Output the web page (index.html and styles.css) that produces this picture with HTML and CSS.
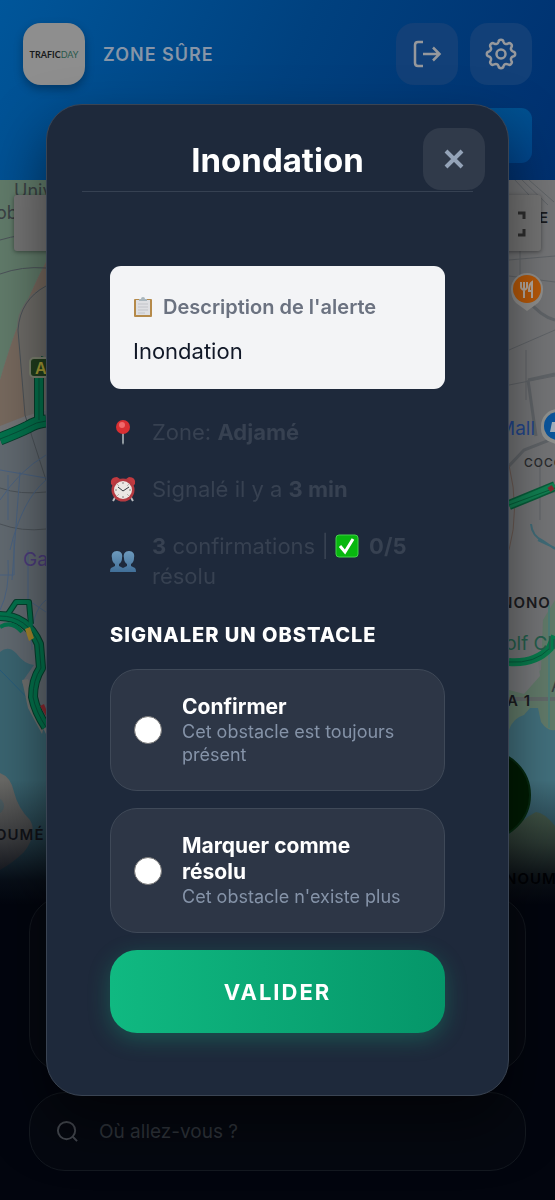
FILE: index.html
```html
<!DOCTYPE html>
<html lang="fr">

<head>
    <meta charset="UTF-8">
    <meta name="viewport" content="width=device-width, initial-scale=1.0">
    <title>TraficDay</title>
    <link rel="stylesheet" href="styles.css">
</head>

<body>
    <header class="header">
        <div class="header-row">
            <div class="logo"><span class="logo-dark">TRAFIC</span><span class="logo-green">DAY</span></div>
            <span class="zone">ZONE SÛRE</span>
            <button class="icon-btn" aria-label="Déconnexion">
                <svg width="32" height="32" viewBox="-16 -16 32 32">
                    <path d="M-4 -12H-9Q-12 -12 -12 -9V9Q-12 12 -9 12H-4M-4 0H12M6 -6.500L12.500 0L6 6.500" />
                </svg>
            </button>
            <button class="icon-btn" aria-label="Paramètres">
                <svg width="32" height="32" viewBox="-16 -16 32 32">
                    <path d="M12.030 -2.560A2.600 2.600 0 0 1 12.030 2.560A2.800 2.800 0 0 0 10.320 6.700A2.600 2.600 0 0 1 6.700 10.320A2.800 2.800 0 0 0 2.560 12.030A2.600 2.600 0 0 1 -2.560 12.030A2.800 2.800 0 0 0 -6.700 10.320A2.600 2.600 0 0 1 -10.320 6.700A2.800 2.800 0 0 0 -12.030 2.560A2.600 2.600 0 0 1 -12.030 -2.560A2.800 2.800 0 0 0 -10.320 -6.700A2.600 2.600 0 0 1 -6.700 -10.320A2.800 2.800 0 0 0 -2.560 -12.030A2.600 2.600 0 0 1 2.560 -12.030A2.800 2.800 0 0 0 6.700 -10.320A2.600 2.600 0 0 1 10.320 -6.700A2.800 2.800 0 0 0 12.030 -2.560Z" />
                    <circle r="4.500" />
                </svg>
            </button>
        </div>
        <button class="header-action" aria-label="Filtrer"></button>
    </header>

    <main class="map">
        <svg class="map-bg" viewBox="0 180 555 1020" preserveAspectRatio="xMidYMin slice" aria-hidden="true">
            <defs>
                <linearGradient id="fade" x1="0" y1="0" x2="0" y2="1">
                    <stop offset="0" stop-color="#02050e" stop-opacity="0" />
                    <stop offset="0.500" stop-color="#02050e" stop-opacity="0.500" />
                    <stop offset="0.800" stop-color="#02050e" stop-opacity="0.900" />
                    <stop offset="1" stop-color="#02050e" />
                </linearGradient>
            </defs>
            <rect y="180" width="555" height="1020" fill="#747577" />
            <!-- left side -->
            <path d="M0 180H46V262Q20 310 0 380Z" fill="#617b6a" />
            <path d="M46 262Q20 310 0 380V426L46 408Z" fill="#77695e" />
            <path d="M46 286Q30 292 22 308Q15 320 18 340L26 416L46 410Z" fill="#6e6c68" />
            <path d="M0 440L46 410V720H0Z" fill="#616970" />
            <g fill="none" stroke="#4c5359" stroke-width="1">
                <path d="M0 240Q20 234 46 233M0 274Q22 266 46 268M18 330L25 415L46 480M0 488Q20 495 46 492M0 524Q22 532 46 529M46 286Q20 300 18 330" />
            </g>
            <g fill="none" stroke="#4a6280" stroke-width="1">
                <path d="M0 500Q20 470 46 455M10 550Q22 500 46 480M0 470L46 478M8 475V520M20 472L12 580M0 575H14V540M46 600Q30 612 32 650M0 610Q10 590 8 560M28 550V600L46 612" />
            </g>
            <path d="M0 652Q8 645 16 653Q24 664 34 665L22 682L32 706L46 734V930H0Z" fill="#3a6470" />
            <path d="M0 670Q20 690 46 718" fill="none" stroke="#285d7c" stroke-width="1" />
            <path d="M22 680L28 679L46 718L42 734L28 708Z" fill="#6f716f" />
            <path d="M0 773Q11 777 14 792Q18 808 30 820Q38 834 24 852Q14 862 0 870Z" fill="#696966" />
            <circle cx="-4" cy="806" r="8" fill="#56696d" />
            <g fill="none" stroke="#063f2d" stroke-width="10" stroke-linejoin="round">
                <path d="M8 614L16 602H29L31 624" stroke-width="6" />
                <path d="M0 439Q18 432 28 427Q36 422 46 421" stroke-width="13" />
                <path d="M39 420V374L46 358M0 616Q27 616 39 644L41 668Q33 680 33 697Q36 712 46 727" />
            </g>
            <g fill="none" stroke="#03724c" stroke-width="8" stroke-linejoin="round">
                <path d="M0 439Q18 432 28 427Q36 422 46 421" stroke-width="11" />
                <path d="M39 420V374L46 358M0 616Q27 616 39 644L41 668Q33 680 33 697Q36 712 46 727" />
                <path d="M0 627Q12 620 22 632M8 614L16 602H29L31 626" stroke-width="4" />
            </g>
            <g fill="none" stroke="#065039" stroke-width="1">
                <path d="M0 439Q18 432 28 427Q36 422 46 421M39 420V374M0 616Q27 616 39 644L41 668Q33 680 33 697Q36 712 46 727" />
            </g>
            <path d="M25 629L30 627L34 638L29 641Z" fill="#a4852c" />
            <path d="M40 706L44 704L46 709V716Z" fill="#8a2930" />
            <rect x="30" y="358" width="30" height="19" rx="4" fill="#203d1d" stroke="#7d8270" stroke-width="2" />
            <text x="35" y="374" class="map-route">A1</text>
            <text x="14" y="197" class="map-place">Univ</text>
            <text x="-4" y="219" class="map-place">ob</text>
            <text x="23" y="566" class="map-poi purple">Ga</text>
            <text x="-5" y="840" class="map-area">OUMÉ</text>

            <!-- right side -->
            <g fill="none" stroke="#606468" stroke-width="1">
                <path d="M509 260L555 256M509 276L555 282M509 350L555 330M509 385L555 376M526 350V400M540 460V520M509 505L555 492M520 250V275" />
                <path d="M515 180L541 208M522 180L548 205M529 180L554 202" />
                <path d="M528 300Q540 316 555 320M528 380L555 374M528 380L536 436M555 438L524 450L509 466" stroke-width="3" />
            </g>
            <path d="M509 465Q520 510 509 550" fill="none" stroke="#6d5b53" stroke-width="1" />
            <path d="M531 524Q532 536 543 541L555 549M538 540L555 548" fill="none" stroke="#416c78" stroke-width="2" />
            <path d="M555 600L543 620L541 670L509 686V800H555Z" fill="#627b6a" />
            <path d="M509 690L524 694L540 676L538 660L509 664Z" fill="#77797b" />
            <path d="M509 699H555" stroke="#626a69" stroke-width="4" />
            <path d="M549 605V728" stroke="#4e7d77" stroke-width="2" />
            <path d="M509 730Q513 718 524 715L530 708H538L541 722Q548 732 555 730V880H509Z" fill="#42707d" />
            <path d="M509 835Q520 820 536 812Q545 813 555 826V930H509Z" fill="#536b56" />
            <path d="M509 505L536 494L555 486" fill="none" stroke="#075e3a" stroke-width="10" />
            <path d="M509 505L536 494L555 486" fill="none" stroke="#118052" stroke-width="7" />
            <path d="M509 505L555 488" fill="none" stroke="#075e3a" stroke-width="1" />
            <path d="M549 490L553 487" stroke="#812b31" stroke-width="5" />
            <path d="M509 662Q535 664 550 648L555 636" fill="none" stroke="#087c4d" stroke-width="8" />
            <path d="M509 662Q535 664 550 648" fill="none" stroke="#065b3c" stroke-width="1" />
            <path d="M516 303Q511 298 511 289A16 16 0 0 1 543 289Q543 298 538 303L527 311Z" fill="#91908e" />
            <circle cx="527" cy="289" r="14" fill="#b75909" />
            <path d="M521 282V287Q521 289 524 290V298M524 282V289M527 282V287Q527 289 524 290M532 298V282Q529 284 529 291H532" fill="none" stroke="#b5aaa0" stroke-width="2" />
            <path d="M548 441Q540 436 541 426A17 17 0 0 1 558 409V445Z" fill="#91928f" />
            <circle cx="558" cy="426" r="14" fill="#0b559c" />
            <path d="M550 432L552 422H555V432Z" fill="#a3b0bd" />
            <text x="539" y="223" class="map-area">E</text>
            <text x="498" y="435" class="map-poi blue">Mall</text>
            <text x="524" y="467" class="map-small">COCO</text>
            <text x="501" y="608" class="map-area">NONO</text>
            <text x="491" y="650" class="map-poi green">Golf Club</text>
            <text x="551" y="692" class="map-place">A</text>
            <text x="507" y="706" class="map-area">A 1</text>
            <rect y="780" width="555" height="125" fill="url(#fade)" />
            <rect y="904" width="555" height="296" fill="#02050e" />
            <text x="505" y="884" class="map-area dim">NOUM</text>
        </svg>
        <div class="map-controls">
            <button class="map-type" aria-label="Type de carte"></button>
            <button class="map-full" aria-label="Plein écran">
                <svg width="26" height="26" viewBox="0 0 26 26">
                    <path d="M2 8V2H8M18 2H24V8M24 18V24H18M8 24H2V18" />
                </svg>
            </button>
        </div>
        <button class="fab" aria-label="Signaler"></button>
        <div class="bottom">
            <div class="panel"></div>
            <label class="search">
                <svg width="23" height="23" viewBox="0 0 24 24">
                    <circle cx="11" cy="11" r="9" />
                    <path d="M17.500 17.500L22 22" />
                </svg>
                <input type="text" placeholder="Où allez-vous ?" aria-label="Où allez-vous ?">
            </label>
        </div>
    </main>

    <div class="overlay">
        <div class="modal" role="dialog" aria-labelledby="modal-title">
            <h1 class="modal-title" id="modal-title">Inondation</h1>
            <button class="close" aria-label="Fermer">
                <svg width="20" height="20" viewBox="0 0 20 20">
                    <path d="M2 2L18 18M18 2L2 18" />
                </svg>
            </button>
            <div class="modal-body">
                <div class="description">
                    <h2 class="description-label">
                        <svg width="20" height="22" viewBox="0 0 20 22" aria-hidden="true">
                            <rect x="1" y="3" width="18" height="18" rx="1" fill="#b58a4a" />
                            <path d="M3 4H17V19H3Z" fill="#dedfe2" />
                            <path d="M5 8H15M5 11H15M5 14H15M5 17H12" stroke="#c2c4c9" />
                            <path d="M6 5V3H8Q8 1 10 1T12 3H14V5Z" fill="#a9b6bd" />
                        </svg>
                        Description de l'alerte
                    </h2>
                    <p class="description-text">Inondation</p>
                </div>

                <div class="info">
                    <svg width="26" height="26" viewBox="0 0 26 26" aria-hidden="true">
                        <path d="M12 12H14V24L13 26L12 24Z" fill="#8f989f" />
                        <circle cx="13" cy="8" r="7" fill="#d92f32" />
                        <circle cx="12" cy="6" r="3" fill="#f0696a" />
                    </svg>
                    <p>Zone: <strong>Adjamé</strong></p>
                </div>
                <div class="info">
                    <svg width="26" height="26" viewBox="0 0 26 26" aria-hidden="true">
                        <path d="M6 20L3 25M20 20L23 25" stroke="#b9bdc2" stroke-width="2" />
                        <path d="M1 8Q0 1 7 1L10 3L3 10ZM25 8Q26 1 19 1L16 3L23 10Z" fill="#c23a40" />
                        <circle cx="13" cy="14" r="11.500" fill="#b53a41" />
                        <circle cx="13" cy="14" r="9" fill="#ebe7e3" />
                        <path d="M13 6V8M13 20V22M5 14H7M19 14H21M7.500 8.500L8.500 9.500M18.500 8.500L17.500 9.500M7.500 19.500L8.500 18.500M18.500 19.500L17.500 18.500" stroke="#88817e" />
                        <path d="M8 11L13 15L19 11" fill="none" stroke="#35383d" />
                    </svg>
                    <p>Signalé il y a <strong>3 min</strong></p>
                </div>
                <div class="info">
                    <svg width="26" height="26" viewBox="0 0 26 26" aria-hidden="true">
                        <defs>
                            <linearGradient id="people" x1="0" y1="0" x2="0" y2="1">
                                <stop offset="0" stop-color="#6d9abd" />
                                <stop offset="1" stop-color="#416f98" />
                            </linearGradient>
                        </defs>
                        <path d="M7 3C3 3 1 6 2 10Q2 14 5 16V18L1 20Q0 21 0 24H26Q26 21 25 20L21 18V16Q24 14 24 10C25 6 23 3 19 3S13 6 14 10Q14 14 17 16V18L13 20L9 18V16Q12 14 12 10C13 6 11 3 7 3Z" fill="url(#people)" />
                    </svg>
                    <p><strong>3</strong> confirmations |
                        <svg class="check" width="24" height="24" viewBox="0 0 24 24" aria-hidden="true">
                            <rect x="1" y="1" width="22" height="22" rx="3" fill="#08b70f" stroke="#43d24b" />
                            <path d="M5 12L10 18L18 5" fill="none" stroke="#fff" stroke-width="3" />
                        </svg>
                        <strong>0/5</strong> résolu</p>
                </div>

                <h2 class="section-title">SIGNALER UN OBSTACLE</h2>
                <label class="option">
                    <input type="radio" name="action" value="confirm">
                    <span>
                        <span class="option-title">Confirmer</span>
                        <span class="option-text">Cet obstacle est toujours présent</span>
                    </span>
                </label>
                <label class="option">
                    <input type="radio" name="action" value="resolved">
                    <span>
                        <span class="option-title">Marquer comme résolu</span>
                        <span class="option-text">Cet obstacle n'existe plus</span>
                    </span>
                </label>
                <button class="submit">VALIDER</button>
            </div>
        </div>
    </div>
</body>

</html>
```
FILE: styles.css
```css
* {
    box-sizing: border-box;
    margin: 0;
}

body {
    display: flex;
    flex-direction: column;
    min-height: 100vh;
    background-color: #02050e;
    font-family: Inter, "Liberation Sans", sans-serif;
}

button {
    border: none;
    padding: 0;
    font-family: inherit;
    cursor: pointer;
}

.header {
    display: flex;
    flex-direction: column;
    gap: 23px;
    padding: 23px 23px 17px;
    background: linear-gradient(115deg, #00569a, #00417f 50%, #00306f);
}

.header-row {
    display: flex;
    align-items: center;
    gap: 12px;
}

.logo {
    display: flex;
    align-items: center;
    justify-content: center;
    width: 62px;
    height: 62px;
    border-radius: 18px;
    background-color: #8e8e8e;
    box-shadow: 0 4px 10px rgba(0, 0, 0, 0.3);
    font-family: Lato, sans-serif;
    font-size: 9px;
}

.logo-dark {
    color: #17191a;
    font-weight: 700;
}

.logo-green {
    color: #28584a;
}

.zone {
    flex: 1;
    margin-left: 6px;
    color: #8795a7;
    font-size: 18px;
    font-weight: 600;
    letter-spacing: 1px;
}

.icon-btn {
    display: flex;
    align-items: center;
    justify-content: center;
    width: 62px;
    height: 62px;
    border-radius: 18px;
    background-color: #124078;
}

.icon-btn svg {
    fill: none;
    stroke: #96989c;
    stroke-width: 2.5;
}

.header-action {
    align-self: flex-end;
    width: 120px;
    height: 55px;
    border-radius: 11px;
    background: linear-gradient(#00508f, #00458b);
}

.map {
    position: relative;
    display: flex;
    flex: 1;
    flex-direction: column;
    justify-content: space-between;
    overflow: hidden;
}

.map-bg {
    position: absolute;
    top: 0;
    left: 0;
    width: 100%;
    height: 100%;
}

.map-place {
    fill: #3a4144;
    font-size: 18px;
}

.map-area {
    fill: #1b1c1f;
    font-size: 15px;
    font-weight: 600;
    letter-spacing: 1px;
}

.map-area.dim {
    fill: #010205;
}

.map-small {
    fill: #292b2e;
    font-size: 12px;
    font-weight: 500;
    letter-spacing: 1px;
}

.map-poi {
    font-size: 19px;
}

.map-route {
    fill: #a59b35;
    font-size: 16px;
    font-weight: 600;
}

.purple {
    fill: #4c3c7c;
}

.blue {
    fill: #23468c;
}

.green {
    fill: #245f4c;
}

.map-controls {
    position: relative;
    display: flex;
    justify-content: space-between;
    padding: 15px 14px;
}

.map-type,
.map-full {
    height: 56px;
    border-radius: 3px;
    background-color: #747474;
    box-shadow: 0 1px 4px rgba(0, 0, 0, 0.4);
}

.map-type {
    width: 120px;
}

.map-full {
    width: 56px;
    padding-top: 5px;
}

.map-full svg {
    fill: none;
    stroke: #2d2d2d;
    stroke-width: 3;
}

.fab {
    position: absolute;
    right: 24px;
    bottom: 360px;
    width: 90px;
    height: 90px;
    border: 2px solid #06290f;
    border-radius: 50%;
    background-color: #001b03;
}

.bottom {
    position: relative;
    display: flex;
    flex-direction: column;
    gap: 20px;
    padding: 0 29px 29px;
}

.panel,
.search {
    border: 1px solid #141920;
    border-radius: 36px;
    background-color: #050810;
}

.panel {
    height: 176px;
}

.search {
    display: flex;
    align-items: center;
    gap: 18px;
    height: 79px;
    padding: 0 26px;
}

.search svg {
    fill: none;
    stroke: #43474e;
    stroke-width: 2;
}

.search input {
    flex: 1;
    min-width: 0;
    border: none;
    outline: none;
    background: none;
    color: #8b8f96;
    font-family: inherit;
    font-size: 19px;
}

.search input::placeholder {
    color: #2f343b;
    opacity: 1;
}

.overlay {
    position: fixed;
    inset: 0;
    display: flex;
    align-items: center;
    padding: 0 46px;
}

.modal {
    position: relative;
    width: 100%;
    padding: 35px 35px 62px;
    border: 1px solid #3a4453;
    border-radius: 36px;
    background-color: #1e293b;
    box-shadow: 0 28px 56px rgba(0, 0, 0, 0.5);
}

.modal-title {
    padding-bottom: 11px;
    border-bottom: 1px solid #364152;
    color: #fff;
    font-size: 33px;
    font-weight: 700;
    line-height: 40px;
    text-align: center;
}

.close {
    position: absolute;
    top: 23px;
    right: 23px;
    display: flex;
    align-items: center;
    justify-content: center;
    width: 62px;
    height: 62px;
    border-radius: 18px;
    background-color: #303a4a;
}

.close svg {
    fill: none;
    stroke: #94a3b8;
    stroke-width: 4;
}

.modal-body {
    padding: 74px 28px 0;
}

.description {
    margin-bottom: 28px;
    padding: 26px 23px 23px;
    border-radius: 11px;
    background-color: #f3f4f6;
}

.description-label {
    display: flex;
    align-items: center;
    gap: 10px;
    margin-bottom: 14px;
    color: #6b7280;
    font-size: 20px;
    font-weight: 600;
    line-height: 30px;
}

.description-text {
    color: #111827;
    font-size: 22px;
    line-height: 30px;
}

.info {
    display: flex;
    align-items: center;
    gap: 16px;
    margin-bottom: 27px;
    color: #374151;
    font-size: 22px;
    line-height: 30px;
}

.info > svg {
    flex-shrink: 0;
}

.check {
    margin-right: 4px;
    vertical-align: -4px;
}

.section-title {
    margin: 30px 0 20px;
    color: #fff;
    font-size: 20px;
    font-weight: 800;
    letter-spacing: 1px;
    line-height: 28px;
}

.option {
    display: flex;
    align-items: center;
    gap: 20px;
    margin-bottom: 17px;
    padding: 24px 32px 24px 23px;
    border: 1px solid #3f4958;
    border-radius: 27px;
    background-color: #2d3646;
    cursor: pointer;
}

.option input {
    flex-shrink: 0;
    appearance: none;
    width: 28px;
    height: 28px;
    margin: 0;
    border: 1px solid #767676;
    border-radius: 50%;
    background-color: #fff;
}

.option input:checked {
    border: 8px solid #10b981;
}

.option-title,
.option-text {
    display: block;
}

.option-title {
    color: #fff;
    font-size: 21px;
    font-weight: 700;
    line-height: 26px;
}

.option-text {
    color: #8593a8;
    font-size: 18px;
    line-height: 23px;
}

.submit {
    display: block;
    width: 100%;
    height: 83px;
    border-radius: 27px;
    background: linear-gradient(90deg, #10b981, #059669);
    box-shadow: 0 6px 22px rgba(16, 185, 129, 0.3);
    color: #fff;
    font-size: 22px;
    font-weight: 700;
    letter-spacing: 2px;
}
```
